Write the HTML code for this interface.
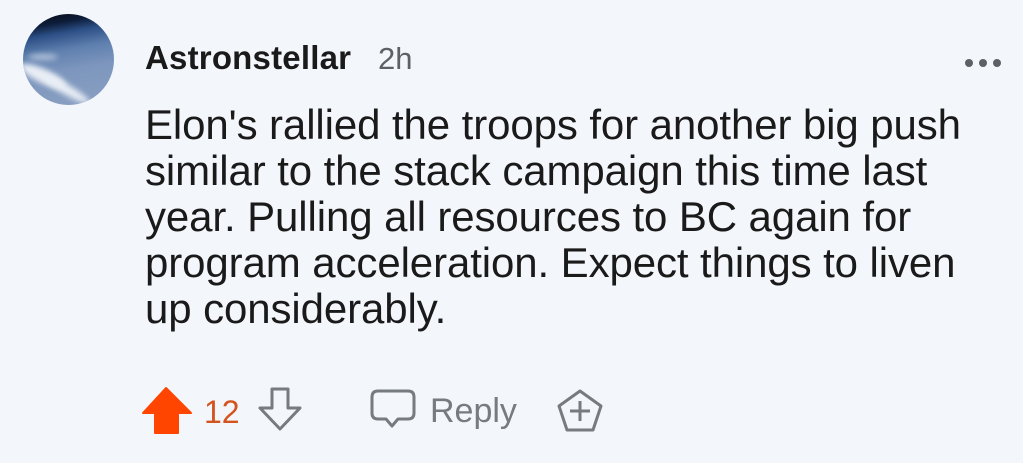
<!DOCTYPE html>
<html><head><style>
body{margin:0;width:1023px;height:463px;background:#f3f6fa;font-family:"Liberation Sans",sans-serif;position:relative;overflow:hidden}
.av{position:absolute;left:23px;top:14px;width:91px;height:91px;border-radius:50%;overflow:hidden;background:linear-gradient(170deg,#05090f 0%,#0d1d3a 14%,#2c4f86 24%,#5e7fae 40%,#7d96bd 60%,#8aa0c2 100%)}
.cl{position:absolute;border-radius:50%;background:#e9eef5;filter:blur(3px)}
.name{position:absolute;left:145px;top:39px;font-size:33px;font-weight:bold;color:#1a1a1b;letter-spacing:0.2px}
.time{position:absolute;left:378px;top:41px;font-size:31px;color:#5c6166}
.txt{position:absolute;left:145px;top:102px;font-size:42px;line-height:46px;color:#1a1a1b;white-space:nowrap;letter-spacing:-0.1px}
.dots{position:absolute;left:965px;top:54px}
.dots i{display:inline-block;width:8px;height:8px;border-radius:50%;background:#5c6166;margin-right:6px}
.n{position:absolute;left:204px;top:394px;font-size:32px;color:#d4541d}
.r{position:absolute;left:430px;top:392px;font-size:34px;color:#767b80}
</style></head><body>
<div class="av"><div class="cl" style="left:-5px;top:55px;width:50px;height:14px;transform:rotate(25deg)"></div><div class="cl" style="left:15px;top:70px;width:55px;height:10px;transform:rotate(30deg)"></div><div class="cl" style="left:5px;top:40px;width:30px;height:6px;opacity:.6"></div></div>
<div class="name">Astronstellar</div><div class="time">2h</div>
<div class="dots"><i></i><i></i><i></i></div>
<div class="txt">Elon's rallied the troops for another big push<br>similar to the stack campaign this time last<br>year. Pulling all resources to BC again for<br>program acceleration. Expect things to liven<br>up considerably.</div>
<svg style="position:absolute;left:0;top:0" width="1023" height="463">
<path d="M166 388 L191 413 L178 413 L178 433 L155 433 L155 413 L143 413 Z" fill="#ff4500" stroke="#ff4500" stroke-width="2" stroke-linejoin="round"/>
<path d="M272 389 L288 389 L288 408 L300 408 L280 429 L260 408 L272 408 Z" fill="none" stroke="#767b80" stroke-width="3" stroke-linejoin="round"/>
<path d="M378 391 L408 391 Q414 391 414 397 L414 413 Q414 419 408 419 L398 419 L392 426 L386 419 L378 419 Q372 419 372 413 L372 397 Q372 391 378 391 Z" fill="none" stroke="#767b80" stroke-width="3" stroke-linejoin="round"/>
<path d="M580 391 L601 406 L593 430 L567 430 L559 406 Z" fill="none" stroke="#767b80" stroke-width="3" stroke-linejoin="round"/>
<path d="M580 401 V421 M570 411 H590" stroke="#767b80" stroke-width="3"/>
</svg>
<div class="n">12</div>
<div class="r">Reply</div>
</body></html>
